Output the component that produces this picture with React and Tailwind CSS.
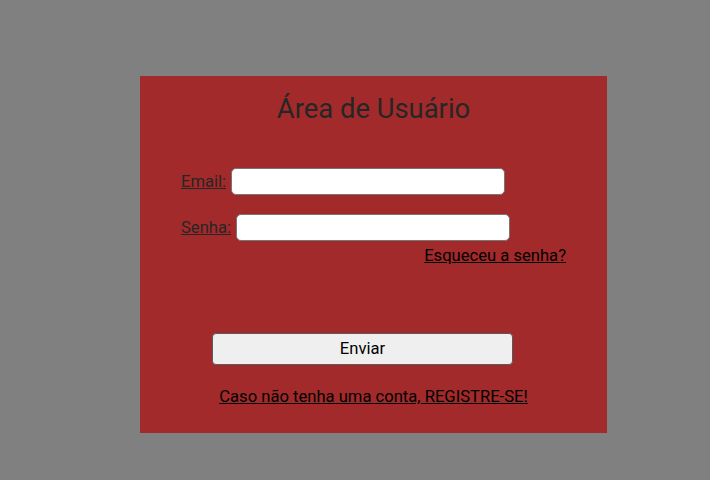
export default function App() {
  return (
    <div className="w-[710px] h-[480px] bg-[#808080] pt-[76px] pl-[140px] font-['Roboto',sans-serif]">
      <div className="w-[467px] h-[357px] bg-[#a22a2a] flex flex-col">
        {/* Titulo */}
        <h1 className="mt-[17px] text-center text-[27.4px] leading-[32px] text-[#262626]">Área de Usuário</h1>

        <form className="flex flex-col mt-[43px]" onSubmit={(e) => e.preventDefault()}>
          <div className="flex items-baseline pl-[41px] gap-[5px]">
            <label htmlFor="email" className="text-[16.6px] underline text-[#262626]">Email:</label>
            <input id="email" type="email" className="w-[274px] h-[27px] bg-white border border-[#767676] rounded-[5px]" />
          </div>
          <div className="flex items-baseline pl-[41px] gap-[5px] mt-[19px]">
            <label htmlFor="senha" className="text-[16.6px] underline text-[#262626]">Senha:</label>
            <input id="senha" type="password" className="w-[274px] h-[27px] bg-white border border-[#767676] rounded-[5px]" />
          </div>
          <div className="flex justify-end pr-[41px] mt-[5px]">
            <a href="#" className="text-[16.6px] leading-[19px] underline text-black">Esqueceu a senha?</a>
          </div>

          <button type="submit" className="ml-[72px] mt-[68px] w-[301px] h-[32px] bg-[#efefef] border border-[#5a5a5a] rounded-[4px] text-[16.6px] text-black">
            Enviar
          </button>
        </form>

        <div className="text-center mt-[20px]">
          <a href="#" className="text-[16.6px] leading-[19px] underline text-black">Caso não tenha uma conta, REGISTRE-SE!</a>
        </div>
      </div>
    </div>
  );
}
